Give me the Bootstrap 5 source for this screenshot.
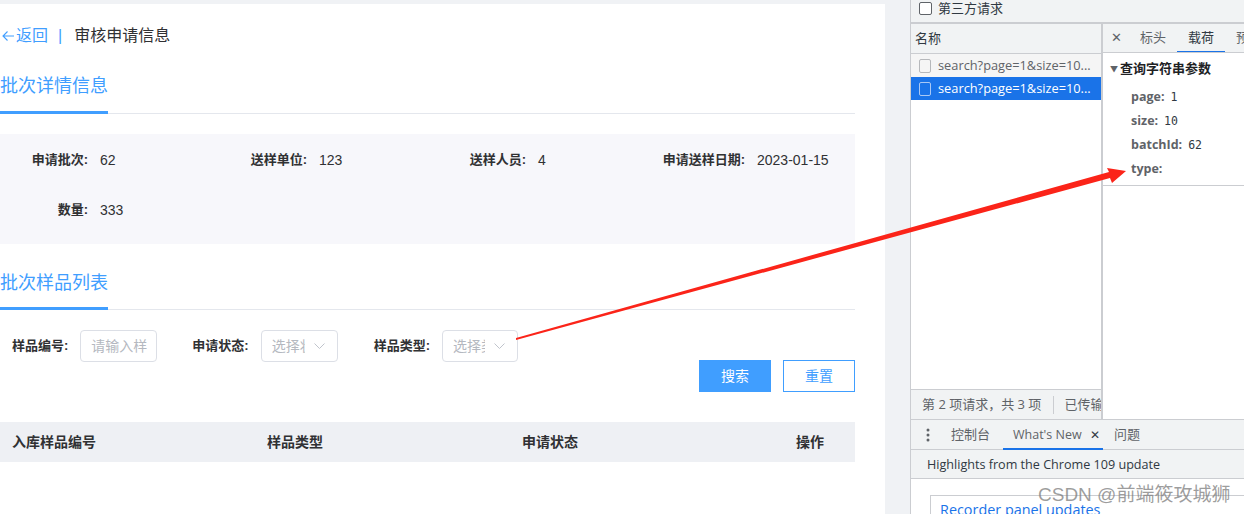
<!DOCTYPE html>
<html lang="zh-CN">
<head>
    <meta charset="UTF-8">
    <meta name="viewport" content="width=device-width, initial-scale=1.0">
    <title>审核申请信息</title>
    <link href="https://cdn.jsdelivr.net/npm/bootstrap@5.3.0/dist/css/bootstrap.min.css" rel="stylesheet">
    <style>
        html, body { height: 514px; overflow: hidden; }
        body { font-family: "Liberation Sans", "Noto Sans CJK SC", sans-serif; font-size: 13px; color: #303133; background: #f0f2f5; position: relative; }
        .shell { height: 514px; }
        .app-pane { width: 885px; margin-top: 4px; background: #fff; padding-right: 30px; flex: none; }
        .crumbs { height: 63px; padding-top: 20px; font-size: 16px; line-height: 24px; }
        .crumbs a { color: #409eff; text-decoration: none; }
        .crumb-arrow { margin: 0 2px 0 2px; vertical-align: -1px; }
        .crumb-sep { color: #409eff; margin: 0 12px 0 10px; }
        .sect-head { height: 47px; border-bottom: 1px solid #e4e7ed; }
        .sect-title { display: inline-block; height: 47px; font-size: 18px; line-height: 38px; color: #409eff; border-bottom: 3px solid #409eff; }
        .sect-second { margin-top: 19px; }
        .sect-second .sect-title { line-height: 40px; }
        .info-box { margin-top: 20px; height: 110px; background: #f7f7fb; padding-top: 1px; }
        .info-row { height: 50px; }
        .info-cell { width: 219px; flex: none; }
        .info-label { width: 88px; text-align: right; font-weight: 700; margin-right: 12px; flex: none; white-space: nowrap; }
        .info-val { font-size: 14px; }
        .filter-bar { padding: 20px 0 0 12px; height: 50px; }
        .filter-bar label { font-weight: 700; margin-right: 12px; line-height: 32px; white-space: nowrap; }
        .fake-input { height: 32px; border: 1px solid #dcdfe6; border-radius: 4px; color: #b4b8c0; font-size: 14px; line-height: 30px; padding-left: 10px; overflow: hidden; white-space: nowrap; flex: none; }
        .fake-text { overflow: hidden; white-space: nowrap; }
        .chev { flex: none; margin: 0 12px 0 9px; }
        .btn-row { gap: 12px; }
        .btn-search, .btn-reset { width: 72px; height: 32px; padding: 0; border-radius: 0; font-size: 14px; line-height: 29px; }
        .btn-search, .btn-search:hover { background: #409eff; border: 1px solid #409eff; color: #fff; }
        .btn-reset, .btn-reset:hover { background: #fff; border: 1px solid #409eff; color: #409eff; }
        .tbl-head { margin-top: 30px; height: 40px; background: #eef0f4; font-size: 14px; font-weight: 700; line-height: 40px; padding-left: 12px; }
        .tbl-col { width: 255px; flex: none; }
        .tbl-col-wide { width: 274px; }

        .dev-pane { width: 334px; height: 514px; margin-left: 25px; flex: none; overflow: hidden; background: #fff; font-family: "Open Sans", "Noto Sans CJK SC", sans-serif; font-size: 13px; color: #303942; border-left: 1px solid #cbcdd1; }
        .dev-pane > * { flex: none; }
        .dev-top { height: 24px; background: #f1f3f4; border-bottom: 2px solid #cbcdd1; padding: 0 0 6px 8px; gap: 6px; line-height: 16px; }
        .dev-check { width: 13px; height: 13px; border: 1px solid #5f6368; border-radius: 2px; background: #fff; flex: none; }
        .dev-split { height: 395px; }
        .req-pane { width: 192px; border-right: 2px solid #cbcdd1; flex: none; }
        .req-head { height: 30px; background: #f1f3f4; border-bottom: 1px solid #cbcdd1; padding-left: 4px; line-height: 28px; flex: none; }
        .req-row { height: 23px; padding-left: 8px; gap: 7px; white-space: nowrap; color: #5f6368; background: #f5f5f5; font-size: 12.8px; flex: none; }
        .req-row.on { background: #1a73e8; color: #fff; }
        .req-icon { width: 12px; height: 14px; border: 1px solid #b6b8bb; border-radius: 2px; flex: none; }
        .req-row.on .req-icon { border-color: #a9c8f5; }
        .req-status { height: 30px; margin-top: auto; background: #f1f3f4; border-top: 1px solid #cbcdd1; padding-left: 11px; white-space: nowrap; overflow: hidden; color: #5f6368; flex: none; }
        .status-sep { width: 1px; height: 18px; background: #cbcdd1; margin: 0 10px 0 12px; flex: none; }
        .detail-pane { min-width: 0; }
        .detail-tabs { height: 29px; background: #f1f3f4; border-bottom: 1px solid #cbcdd1; white-space: nowrap; overflow: hidden; color: #5f6368; }
        .detail-x { width: 26px; text-align: center; flex: none; font-size: 13px; }
        .detail-tab { height: 29px; line-height: 27px; padding: 0 11px; flex: none; }
        .detail-tab.on { color: #303942; border-bottom: 2px solid #1a73e8; }
        .param-title { font-weight: 700; padding: 6px 0 0 7px; height: 32px; line-height: 18px; color: #202124; }
        .param-caret { font-size: 8px; color: #5f6368; margin-right: 2px; vertical-align: 1px; }
        .param-row { padding-left: 28px; height: 24px; line-height: 24px; white-space: nowrap; font-size: 12.5px; }
        .param-row b { color: #5f6368; margin-right: 6px; }
        .param-val { font-family: "DejaVu Sans Mono", "Liberation Mono", monospace; font-size: 11.500px; }
        .param-end { height: 5px; border-bottom: 1px solid #cbcdd1; }
        .drawer-tabs { height: 31px; background: #f1f3f4; border-top: 1px solid #cbcdd1; border-bottom: 1px solid #cbcdd1; color: #5f6368; }
        .drawer-dots { width: 34px; text-align: center; flex: none; }
        .drawer-tab { height: 30px; line-height: 29px; flex: none; white-space: nowrap; }
        .drawer-first { margin-left: 6px; }
        .drawer-tab.on { border-bottom: 2px solid #1a73e8; width: 100px; padding-left: 10px; margin: 0 11px 0 13px; font-size: 12.5px; }
        .drawer-x { color: #303942; margin-left: 8px; font-size: 12px; }
        .drawer-title { height: 29px; background: #f1f3f4; border-bottom: 1px solid #cbcdd1; padding-left: 16px; line-height: 30px; color: #303942; font-size: 12.6px; }
        .news-box { margin: 16px 0 0 19px; border: 1px solid #cbcdd1; border-right: 0; height: 40px; padding: 5px 9px; color: #1a73e8; font-size: 14.400px; line-height: 18px; white-space: nowrap; }

        .stamp { position: absolute; left: 1038px; top: 483px; font-family: "Liberation Sans", "Noto Sans CJK SC", sans-serif; font-size: 19px; line-height: 24px; color: rgba(120,120,120,.72); white-space: nowrap; }
        .arrow-layer { position: absolute; left: 0; top: 0; pointer-events: none; }
    </style>
</head>
<body>
    <div class="shell d-flex">
        <div class="app-pane">
            <div class="crumbs">
                <a href="#"><svg class="crumb-arrow" width="12" height="12" viewBox="0 0 12 12"><path d="M12 6H1M5.500 1.500L1 6l4.500 4.500" fill="none" stroke="#409eff" stroke-width="1.100"/></svg>返回</a><span class="crumb-sep">|</span><span>审核申请信息</span>
            </div>
            <div class="sect-head"><span class="sect-title">批次详情信息</span></div>
            <div class="info-box">
                <div class="info-row d-flex align-items-center">
                    <div class="info-cell d-flex align-items-center"><span class="info-label">申请批次:</span><span class="info-val">62</span></div>
                    <div class="info-cell d-flex align-items-center"><span class="info-label">送样单位:</span><span class="info-val">123</span></div>
                    <div class="info-cell d-flex align-items-center"><span class="info-label">送样人员:</span><span class="info-val">4</span></div>
                    <div class="info-cell d-flex align-items-center"><span class="info-label">申请送样日期:</span><span class="info-val">2023-01-15</span></div>
                </div>
                <div class="info-row d-flex align-items-center">
                    <div class="info-cell d-flex align-items-center"><span class="info-label">数量:</span><span class="info-val">333</span></div>
                </div>
            </div>
            <div class="sect-head sect-second"><span class="sect-title">批次样品列表</span></div>
            <div class="filter-bar d-flex">
                <label>样品编号:</label>
                <div class="fake-input" style="width:77px">请输入样</div>
                <label style="margin-left:35px">申请状态:</label>
                <div class="fake-input d-flex" style="width:77px"><span class="fake-text" style="width:34px">选择状态</span><svg class="chev" width="11" height="30" viewBox="0 0 11 30"><path d="M.5 12.500l5 5 5-5" fill="none" stroke="#c0c4cc" stroke-width="1"/></svg></div>
                <label style="margin-left:36px">样品类型:</label>
                <div class="fake-input d-flex" style="width:76px"><span class="fake-text" style="width:33px">选择类型</span><svg class="chev" width="11" height="30" viewBox="0 0 11 30"><path d="M.5 12.500l5 5 5-5" fill="none" stroke="#c0c4cc" stroke-width="1"/></svg></div>
            </div>
            <div class="btn-row d-flex justify-content-end">
                <button type="button" class="btn btn-search">搜索</button>
                <button type="button" class="btn btn-reset">重置</button>
            </div>
            <div class="tbl-head d-flex">
                <div class="tbl-col">入库样品编号</div>
                <div class="tbl-col">样品类型</div>
                <div class="tbl-col tbl-col-wide">申请状态</div>
                <div>操作</div>
            </div>
        </div>

        <div class="dev-pane d-flex flex-column">
            <div class="dev-top d-flex align-items-center"><span class="dev-check"></span><span>第三方请求</span></div>
            <div class="dev-split d-flex">
                <div class="req-pane d-flex flex-column">
                    <div class="req-head">名称</div>
                    <div class="req-row d-flex align-items-center"><span class="req-icon"></span><span>search?page=1&amp;size=10...</span></div>
                    <div class="req-row on d-flex align-items-center"><span class="req-icon"></span><span>search?page=1&amp;size=10...</span></div>
                    <div class="req-status d-flex align-items-center"><span>第 2 项请求，共 3 项</span><span class="status-sep"></span><span>已传输</span></div>
                </div>
                <div class="detail-pane flex-grow-1">
                    <div class="detail-tabs d-flex align-items-center">
                        <span class="detail-x">✕</span>
                        <span class="detail-tab">标头</span>
                        <span class="detail-tab on">载荷</span>
                        <span class="detail-tab">预览</span>
                    </div>
                    <div class="param-title"><span class="param-caret">▼</span>查询字符串参数</div>
                    <div class="param-row"><b>page:</b><span class="param-val">1</span></div>
                    <div class="param-row"><b>size:</b><span class="param-val">10</span></div>
                    <div class="param-row"><b>batchId:</b><span class="param-val">62</span></div>
                    <div class="param-row"><b>type:</b></div>
                    <div class="param-end"></div>
                </div>
            </div>
            <div class="drawer-tabs d-flex align-items-center">
                <span class="drawer-dots"><svg width="4" height="14" viewBox="0 0 4 14"><circle cx="2" cy="2" r="1.500" fill="#5f6368"/><circle cx="2" cy="7" r="1.500" fill="#5f6368"/><circle cx="2" cy="12" r="1.500" fill="#5f6368"/></svg></span>
                <span class="drawer-tab drawer-first">控制台</span>
                <span class="drawer-tab on">What's New<span class="drawer-x">✕</span></span>
                <span class="drawer-tab">问题</span>
            </div>
            <div class="drawer-title">Highlights from the Chrome 109 update</div>
            <div class="news-box">Recorder panel updates</div>
        </div>
    </div>

    <svg class="arrow-layer" width="1244" height="514" viewBox="0 0 1244 514">
        <polygon points="516,338 1109,172 1107,168 1126,171 1112,183 1110,178 516,340" fill="#fb2419"/>
    </svg>
    <div class="stamp">CSDN @前端筱攻城狮</div>

    <script src="https://cdn.jsdelivr.net/npm/bootstrap@5.3.0/dist/js/bootstrap.bundle.min.js"></script>
</body>
</html>
